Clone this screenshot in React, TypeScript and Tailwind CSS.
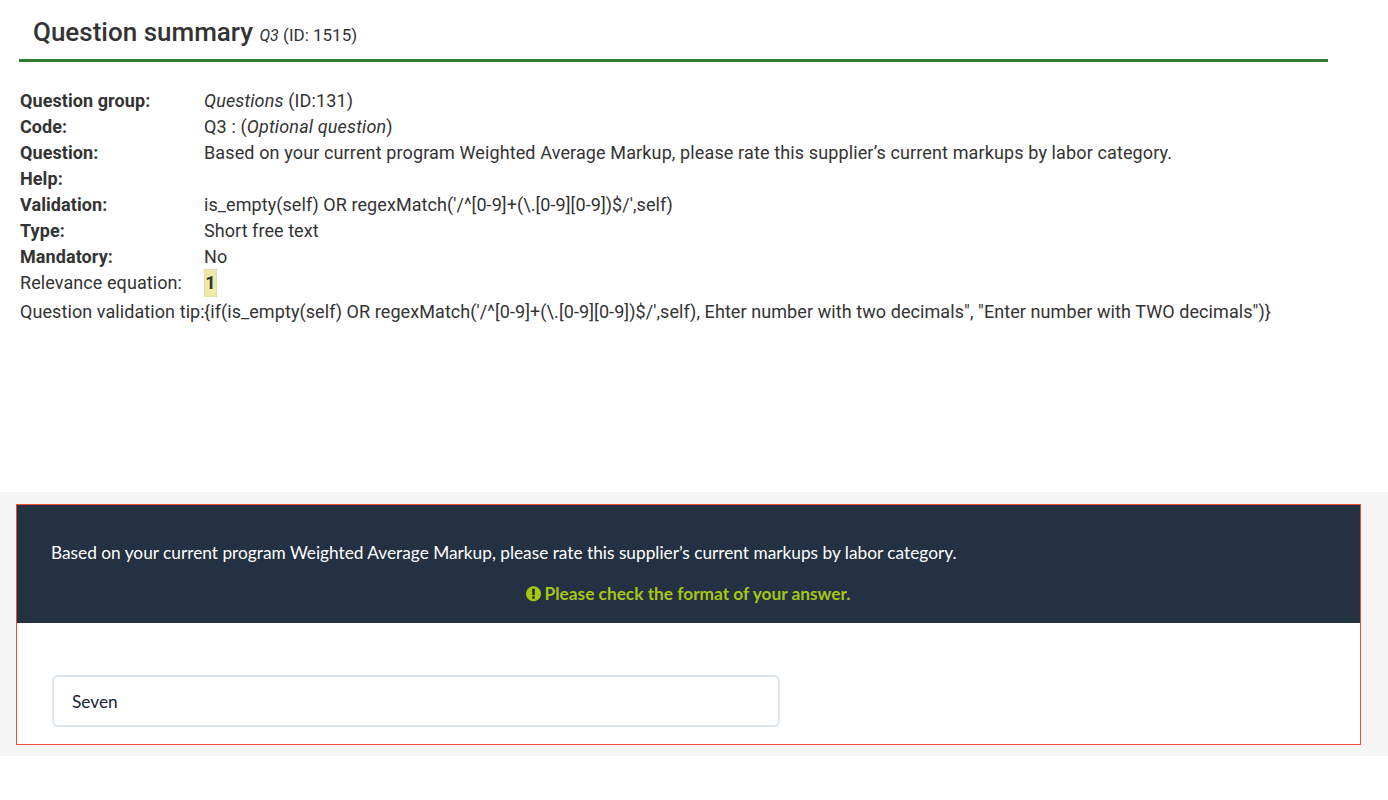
import React from 'react';

const rows: { label: string; value: React.ReactNode; spacing: string }[] = [
  { label: 'Question group:', value: <><em>Questions</em> (ID:131)</>, spacing: 'tracking-[0.125px]' },
  { label: 'Code:', value: <>Q3 : (<em>Optional question</em>)</>, spacing: 'tracking-[0.15px]' },
  { label: 'Question:', value: 'Based on your current program Weighted Average Markup, please rate this supplier’s current markups by labor category.', spacing: 'tracking-[0.125px]' },
  { label: 'Help:', value: '', spacing: 'tracking-[0.125px]' },
  { label: 'Validation:', value: "is_empty(self) OR regexMatch('/^[0-9]+(\\.[0-9][0-9])$/',self)", spacing: 'tracking-[0.075px]' },
  { label: 'Type:', value: 'Short free text', spacing: 'tracking-[0.06px]' },
  { label: 'Mandatory:', value: 'No', spacing: 'tracking-[0.125px]' },
];

function AlertIcon() {
  return (
    <svg viewBox="0 0 1536 1792" className="w-[15px] h-[17.5px] fill-current shrink-0">
      <path d="M768 128q209 0 385.5 103t279.5 279.5 103 385.5-103 385.5-279.5 279.5-385.5 103-385.5-103-279.5-279.5-103-385.5 103-385.5 279.5-279.5 385.5-103zm128 1247v-190q0-14-9-23.5t-22-9.5h-192q-13 0-23 10t-10 23v190q0 13 10 23t23 10h192q13 0 22-9.5t9-23.5zm-2-344l18-621q0-12-10-18-10-8-24-8h-220q-14 0-24 8-10 6-10 18l17 621q0 10 10 17.5t24 7.5h185q14 0 23.5-7.5t10.5-17.5z" />
    </svg>
  );
}

export default function App() {
  return (
    <div className="min-h-[800px] bg-white font-['Roboto',sans-serif] text-[#333] overflow-hidden">
      <div className="h-[492px] pl-[19px]">
        <div className="w-[1309px] h-[62px] border-b-[3px] border-[#2f7d32] pl-[14px] pt-[14px]">
          <h3 className="text-[26px] leading-[36px] font-medium">
            Question summary{' '}
            <small className="text-[17px] font-normal"><em className="text-[16px]">Q3</em> (ID: 1515)</small>
          </h3>
        </div>

        <div className="pt-[26px] pl-px text-[18px] leading-[26px]">
          {rows.map((row) => (
            <div key={row.label} className="flex h-[26px]">
              <div className="w-[184px] font-bold tracking-[0.08px]">{row.label}</div>
              <div className={row.spacing}>{row.value}</div>
            </div>
          ))}
          <div className="flex h-[26px] items-center">
            <div className="w-[184px] tracking-[0.08px]">Relevance equation:</div>
            <span className="bg-[#eee8aa] h-[28px] w-[13px] justify-center font-bold leading-[28px] border border-dotted border-[#d8d49a] flex items-center">1</span>
          </div>
          <div className="flex h-[30px] pt-[3px] whitespace-nowrap">
            <div className="w-[184px] tracking-[0.08px]">Question validation tip:</div>
            <div className="tracking-[0.08px]">{"{if(is_empty(self) OR regexMatch('/^[0-9]+(\\.[0-9][0-9])$/',self), Ehter number with two decimals\", \"Enter number with TWO decimals\")}"}</div>
          </div>
        </div>
      </div>

      <div className="bg-[#f5f5f5] h-[264px] pt-[12px] pl-[16px] font-['Lato',sans-serif]">
        <div className="w-[1345px] h-[241px] border border-[#f04b36] bg-white">
          <div className="bg-[#233142] h-[118px] pl-[34px] pt-[35px] text-white text-[17.27px] leading-[26px]">
            <div>Based on your current program Weighted Average Markup, please rate this supplier’s current markups by labor category.</div>
            <div className="mt-[15px] flex items-center justify-center gap-[4px] text-[#a6c612] font-bold text-[17.3px] pr-[35px]">
              <AlertIcon />
              <span>Please check the format of your answer.</span>
            </div>
          </div>
          <div className="pl-[35px] pt-[52px]">
            <div className="w-[728px] h-[52px] border-[2px] border-[#dde5ed] rounded-[6px] pl-[18px] pt-px flex items-center text-[17.27px] text-[#14233c]">
              Seven
            </div>
          </div>
        </div>
      </div>
    </div>
  );
}
